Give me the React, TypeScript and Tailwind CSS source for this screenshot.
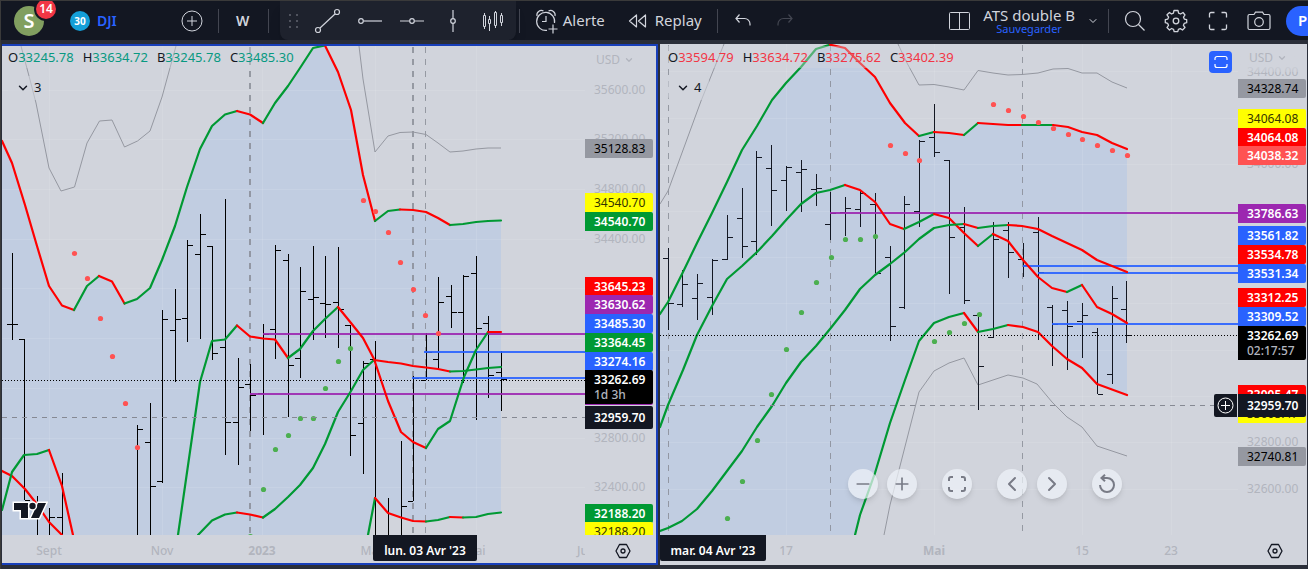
import React from 'react';
import { ChevronDown, ChevronLeft, ChevronRight, Minus, Plus } from 'lucide-react';

type Tone = 'red' | 'green';
type Segment = [Tone, string];
// x, high, low, open, close (null when the tick is out of view)
type Bar = [number, number, number, number | null, number | null];
type Dot = [number, number];
type Level = { y: number; from: number; color: string };
type Cursor = { x: number; width: number };
type Tag = { y: number; text: string; style: string; sub?: string };
type TimeLabel = { x: number; text: string; bold?: boolean };

interface ChartData {
  box: { x: number; y: number; w: number; h: number };
  fill: string;
  lines: Segment[][];
  grey: string[];
  bars: Bar[];
  barColor: string;
  redDots: Dot[];
  greenDots: Dot[];
  levels: Level[];
  cursors: Cursor[];
  cursorY: number;
  priceY: number;
  gridX: number[];
  gridY: number[];
}

const PURPLE = '#9c27b0';
const BLUE = '#2962ff';

const DAILY: ChartData = {
  box: { x: 2, y: 46, w: 583, h: 489 },
  fill: '2,141 12,163 25,205 37,246 49,286 62,305.5 74,310 87,286 99,276 112,281.5 124.5,303.5 137,299 150,288 162,260 175,226 187,187 200,149 212,126 225,114.5 237,111 250,114.5 263,123 275,103 288,86 300,68 313,48 325,45.5 338,72 351,110 363,175 375,221 388,211 400,209.5 413,210 426,212 438,218 450,225 463,224 476,222 488,221 501,220.5 501,512.5 488,514 476,517 463,517.5 450,517 438,520 426,521.5 413,521 401,517.5 388,513 375,498 368,535 2,535',
  lines: [
    [
      ['red', '2,141 12,163 25,205 37,246 49,286 62,305.5 74,310'],
      ['green', '74,310 87,286 99,276'],
      ['red', '99,276 112,281.5 124.5,303.5'],
      ['green', '124.5,303.5 137,299 150,288 162,260 175,226 187,187 200,149 212,126 225,114.5 237,111'],
      ['red', '237,111 250,114.5 263,123'],
      ['green', '263,123 275,103 288,86 300,68 313,48 325,45.5'],
      ['red', '325,45.5 338,72 351,110 363,175 375,221'],
      ['green', '375,221 388,211 400,209.5'],
      ['red', '400,209.5 413,210 426,212 438,218 450,225'],
      ['green', '450,225 463,224 476,222 488,221 501,220.5'],
    ],
    [['red', '2,471 12,476 25,489 36,503 49,522 62,535']],
    [
      ['green', '2,510 12,472 24,455 37,454 49,450'],
      ['red', '49,450 62,486 73,535'],
    ],
    [
      ['green', '178,535 200,382 212,341 225,339.5 237,325.5'],
      ['red', '237,325.5 250,336.5 263,338.5 275,339.5 288,358'],
      ['green', '288,358 300,349 313,331 325,319 338,307'],
      ['red', '338,307 351,323 363,338 374,359 388,401 401,432 413,442 426,448'],
      ['green', '426,448 438,429 450,421 464,377 476,350 488,332'],
      ['red', '488,332 501,332'],
    ],
    [
      ['green', '198,535 212,520.5 225,514.5 237,512.5'],
      ['red', '237,512.5 250,514.5 263,517.5'],
      ['green', '263,517.5 275,509 288,497 300,485 313,468 325,444 338,412 351,391 363,370 374,360'],
      ['red', '374,360 388,362 401,363.5 413,366 426,367.5 438,369 450,371.5'],
      ['green', '450,371.5 463,371 476,369.5 488,368 501,367'],
    ],
    [
      ['green', '368,535 375,498'],
      ['red', '375,498 388,513 401,517.5 413,521 426,521.5'],
      ['green', '426,521.5 438,520 450,517'],
      ['red', '450,517 463,517.5'],
      ['green', '463,517.5 476,517 488,514 501,512.5'],
    ],
  ],
  grey: [
    '21,46 29,76 36,103 49,168 61,191 74.5,187 87,143 99.5,121 112,120 124.5,147 137.5,141 150,131 162,97 176,46',
    '359,46 363,79 375,152 388,136 400,132.5 413,132 426,134.5 438,143 450,152 463,151 476,149 488,148 501,148',
  ],
  bars: [
    [12, 253, 340, 324, 324],
    [24, 339, 500, 339, 500],
    [37, 496, 540, null, null],
    [49, 508, 540, null, 517],
    [62, 473, 540, 517, null],
    [137, 425, 540, null, 429],
    [150, 403, 540, 442, 486],
    [162, 310, 483, 481, 319],
    [175, 289, 382, 330, 319],
    [187, 240, 342, 318, 245],
    [200, 214, 339, 254, 234],
    [212, 246, 360, 246, 353],
    [225, 199, 455, 347, 422],
    [238, 358, 465, 422, 387],
    [250, 364, 431, 384, 395],
    [263, 324, 435, 393, 334],
    [275, 245, 359, 329, 250],
    [288, 254, 417, 260, 365],
    [300, 267, 378, 358, 291],
    [313, 246, 340, 299, 297],
    [325, 256, 338, 303, 304],
    [338, 247, 348, 302, 309],
    [350, 325, 456, 325, 435],
    [363, 361, 474, 423, 363],
    [375, 341, 540, 359, null],
    [388, 498, 540, null, null],
    [401, 441, 540, null, 506],
    [413, 376, 501, 501, 378],
    [426, 333, 380, 380, 352],
    [438, 277, 369, 359, 302],
    [451, 285, 328, 296, 312],
    [463, 275, 383, 312, 276],
    [476, 256, 420, 273, 328],
    [488, 316, 398, 323, 375],
    [501, 351, 411, 372, 379],
  ],
  barColor: '#000000',
  redDots: [[74.5, 253], [87.5, 278], [100.5, 318], [112.5, 356], [125.5, 403], [137.5, 447], [363.5, 200], [375.5, 211], [388.5, 232], [400.5, 262], [413.5, 289], [425.5, 315], [438.5, 333]],
  greenDots: [[250.5, 536], [263.5, 489], [275.5, 449], [288.5, 435], [300.5, 418], [313.5, 418], [325.5, 388], [338.5, 361], [350.5, 348]],
  levels: [
    { y: 334, from: 263, color: PURPLE },
    { y: 394, from: 250, color: PURPLE },
    { y: 352, from: 424, color: BLUE },
    { y: 378, from: 412, color: BLUE },
  ],
  cursors: [{ x: 250, width: 2 }, { x: 413, width: 2 }, { x: 425.5, width: 1 }],
  cursorY: 417.5,
  priceY: 380.5,
  gridX: [49.5, 162.5, 262.5, 375.5, 476.5],
  gridY: [90.5, 139.5, 189.5, 239.5, 288.5, 338.5, 388.5, 438.5, 487.5],
};

const HOURLY: ChartData = {
  box: { x: 660, y: 44, w: 578, h: 491 },
  fill: '660,314 668,302 683,272 697,243 712,213 727,182 742,150 757,126 772,100 786,83 801,67 816,49 830,44.7 845,48 860,63 875,77 890,103 905,123 919,136 934,132 949,133 964,135 978,123 993,124 1008,125 1053,125 1068,127 1082,132 1097,135 1112,143 1127,149 1127,395 1097,384 1082,368 1067,359 1052,346 1038,332 1023,327 1008,325 993,329 978,332 964,313 949,317 934,323 919,341 905,380 890,423 875,473 860,515 855,535 660,535',
  lines: [
    [
      ['green', '660,314 668,302 683,272 697,243 712,213 727,182 742,150 757,126 772,100 786,83 801,67 816,49 830,44.7'],
      ['red', '830,44.7 845,48 860,63 875,77 890,103 905,123 919,136'],
      ['green', '919,136 934,132'],
      ['red', '934,132 949,133 964,135'],
      ['green', '964,135 978,123'],
      ['red', '978,123 993,124 1008,125 1022,125'],
      ['green', '1022,125 1053,125'],
      ['red', '1053,125 1068,127 1082,132 1097,135 1112,143 1127,149'],
    ],
    [
      ['green', '660,427 668,405 683,370 697,335 712,306 727,279 742,266 757,252 772,236 787,219 801,204 816,193 830,190 845,185'],
      ['red', '845,185 860,190 875,202 890,224 904,229'],
      ['green', '904,229 919,222 934,214'],
      ['red', '934,214 949,218 964,233 978,246'],
      ['green', '978,246 993,234'],
      ['red', '993,234 1008,241 1023,260 1038,277 1052,288 1067,292'],
      ['green', '1067,292 1082,285'],
      ['red', '1082,285 1097,307 1112,314 1127,323'],
    ],
    [
      ['green', '660,531 668,528 682,521 697,509 712,491 727,471 742,451 757,427 772,406 786,383 801,362 816,346 830,329 845,310 860,289 875,275 890,264 905,252 919,239 934,228 949,225 964,224'],
      ['red', '964,224 978,228'],
      ['green', '978,228 993,226 1008,225'],
      ['red', '1008,225 1022,226 1038,229 1052,236 1067,243 1082,250 1097,260 1112,266 1127,272'],
    ],
    [
      ['green', '855,535 860,515 875,473 890,423 905,380 919,341 934,323 949,317 964,313'],
      ['red', '964,313 978,332'],
      ['green', '978,332 993,329 1008,325'],
      ['red', '1008,325 1023,327 1038,332 1052,346 1067,359 1082,368 1097,384 1127,395'],
    ],
  ],
  grey: [
    '660,204 668,191 701,101 724,44',
    '898,44 907,63 919,85 934,84.5 949,87 964,90 978,70.5 993,73 1008,75 1022,74.5 1038,73 1053,69 1068,68.5 1082,73 1097,73 1112,82 1127,88',
    '884,535 890,505 919,392 934,371 949,363 964,358 978,385 993,380 1008,375 1023,378 1037,384 1052,402 1067,417 1082,427 1097,446 1127,456',
  ],
  bars: [
    [668, 248, 330, 258, 303],
    [682, 270, 307, 304, 284],
    [697, 274, 320, 298, 283],
    [712, 259, 315, 297, 260],
    [727, 215, 260, 259, 237],
    [742, 188, 258, 218, 246],
    [756, 151, 255, 241, 157],
    [771, 145, 226, 168, 190],
    [786, 166, 211, 180, 167],
    [801, 160, 212, 172, 169],
    [816, 174, 206, 189, 188],
    [830, 192, 240, 224, 213],
    [845, 197, 236, 212, 208],
    [860, 191, 227, 209, 193],
    [875, 193, 273, 204, 273],
    [890, 246, 341, 257, 326],
    [904, 196, 309, 307, 204],
    [919, 140, 227, 211, 141],
    [934, 104, 157, 137, 152],
    [949, 160, 294, 160, 237],
    [964, 207, 304, 227, 300],
    [978, 315, 410, 315, 366],
    [993, 222, 338, 337, 239],
    [1008, 222, 278, 230, 252],
    [1023, 243, 277, 259, 265],
    [1038, 217, 340, 232, 272],
    [1052, 305, 366, 307, 324],
    [1067, 301, 370, 310, 326],
    [1082, 303, 358, 321, 315],
    [1097, 328, 394, 332, 394],
    [1112, 286, 384, 374, 298],
    [1126, 281, 343, 309, 335],
  ],
  barColor: '#131722',
  redDots: [[890.5, 145], [905.5, 153], [919.5, 160], [993.5, 104], [1008.5, 110], [1023.5, 116], [1038.5, 122], [1053.5, 128], [1068.5, 134], [1082.5, 139], [1097.5, 145], [1112.5, 150], [1127.5, 155]],
  greenDots: [[727.5, 518], [742.5, 481], [757.5, 440], [771.5, 394], [786.5, 349], [801.5, 312], [816.5, 282], [831.5, 257], [845.5, 239], [860.5, 239], [875.5, 236], [934.5, 341], [949.5, 332], [964.5, 323], [979.5, 314]],
  levels: [
    { y: 213, from: 830, color: PURPLE },
    { y: 266, from: 1023, color: BLUE },
    { y: 273, from: 1038, color: BLUE },
    { y: 324, from: 1052, color: BLUE },
  ],
  cursors: [{ x: 668.5, width: 1 }, { x: 830.5, width: 1 }, { x: 1022.5, width: 1 }],
  cursorY: 405.5,
  priceY: 335.5,
  gridX: [786.5, 934.5, 1082.5, 1171.5],
  gridY: [71.5, 118.5, 164.5, 211.5, 257.5, 303.5, 350.5, 396.5, 442.5, 489.5],
};

const GREY_TAG = 'bg-[#9598a1] text-black';
const YELLOW_TAG = 'bg-[#ffff00] text-[#333300]';
const GREEN_TAG = 'bg-[#009933] text-white font-semibold';
const RED_TAG = 'bg-[#ff0000] text-white font-semibold';
const LIGHT_RED_TAG = 'bg-[#ff5252] text-white font-semibold';
const PURPLE_TAG = 'bg-[#9c27b0] text-white font-semibold';
const BLUE_TAG = 'bg-[#2962ff] text-white font-semibold';

const DAILY_TAGS: Tag[] = [
  { y: 139, text: '35128.83', style: GREY_TAG },
  { y: 193, text: '34540.70', style: YELLOW_TAG },
  { y: 212, text: '34540.70', style: GREEN_TAG },
  { y: 277, text: '33645.23', style: RED_TAG },
  { y: 386, text: '', style: PURPLE_TAG },
  { y: 295, text: '33630.62', style: PURPLE_TAG },
  { y: 314, text: '33485.30', style: BLUE_TAG },
  { y: 333, text: '33364.45', style: GREEN_TAG },
  { y: 352, text: '33274.16', style: BLUE_TAG },
  { y: 370, text: '33262.69', style: 'bg-black text-white font-semibold', sub: '1d 3h' },
  { y: 504, text: '32188.20', style: GREEN_TAG },
  { y: 522, text: '32188.20', style: YELLOW_TAG },
];

const HOURLY_TAGS: Tag[] = [
  { y: 79, text: '34328.74', style: GREY_TAG },
  { y: 109, text: '34064.08', style: YELLOW_TAG },
  { y: 128, text: '34064.08', style: RED_TAG },
  { y: 146, text: '34038.32', style: LIGHT_RED_TAG },
  { y: 204, text: '33786.63', style: PURPLE_TAG },
  { y: 226, text: '33561.82', style: BLUE_TAG },
  { y: 245, text: '33534.78', style: RED_TAG },
  { y: 264, text: '33531.34', style: BLUE_TAG },
  { y: 288, text: '33312.25', style: RED_TAG },
  { y: 307, text: '33309.52', style: BLUE_TAG },
  { y: 326, text: '33262.69', style: 'bg-black text-white font-semibold', sub: '02:17:57' },
  { y: 385, text: '33005.47', style: RED_TAG },
  { y: 404, text: '33005.47', style: YELLOW_TAG },
  { y: 447, text: '32740.81', style: GREY_TAG },
];

const TONES = { red: '#ff0000', green: '#009933' };

const Plot: React.FC<{ data: ChartData }> = ({ data }) => {
  const { x, y, w, h } = data.box;
  const right = x + w;
  const bottom = y + h;
  return (
    <svg className="block h-full w-full" viewBox={`${x} ${y} ${w} ${h}`} preserveAspectRatio="none">
      <polygon points={data.fill} fill="#c1cde1" />
      {data.gridX.map((gx) => (
        <line key={gx} x1={gx} x2={gx} y1={y} y2={bottom} stroke="#ffffff" strokeOpacity={0.1} />
      ))}
      {data.gridY.map((gy) => (
        <line key={gy} x1={x} x2={right} y1={gy} y2={gy} stroke="#ffffff" strokeOpacity={0.1} />
      ))}
      {data.cursors.map((c) => (
        <line key={c.x} x1={c.x} x2={c.x} y1={y + 1} y2={bottom} stroke="#868993" strokeOpacity={0.8} strokeWidth={c.width} strokeDasharray="6 6" />
      ))}
      {data.grey.map((points) => (
        <polyline key={points} points={points} fill="none" stroke="#9598a1" strokeWidth={1} />
      ))}
      <g fill={data.barColor}>
        {data.bars.map(([bx, high, low, open, close]) => (
          <g key={bx}>
            <rect x={bx} y={high} width={1} height={low - high} />
            {open !== null && <rect x={bx - 5} y={open} width={5} height={1} />}
            {close !== null && <rect x={bx + 1} y={close} width={5} height={1} />}
          </g>
        ))}
      </g>
      {data.levels.map((l) => (
        <line key={l.y} x1={l.from} x2={right} y1={l.y} y2={l.y} stroke={l.color} strokeOpacity={0.9} strokeWidth={2} />
      ))}
      {data.lines.map((line, i) => (
        <g key={i} fill="none" strokeWidth={2.2} strokeLinejoin="round" strokeLinecap="round">
          {line.map(([tone, points]) => (
            <polyline key={points} points={points} stroke={TONES[tone]} />
          ))}
        </g>
      ))}
      {data.redDots.map(([dx, dy]) => (
        <circle key={dx} cx={dx} cy={dy + 0.5} r={2.6} fill="#ff5252" />
      ))}
      {data.greenDots.map(([dx, dy]) => (
        <circle key={dx} cx={dx} cy={dy + 0.5} r={2.6} fill="#4caf50" />
      ))}
      <line x1={x} x2={right} y1={data.priceY} y2={data.priceY} stroke="#000000" strokeDasharray="1 2" />
      <line x1={x} x2={right} y1={data.cursorY} y2={data.cursorY} stroke="#868993" strokeDasharray="5 5" />
    </svg>
  );
};

interface LegendProps {
  values: [string, string][];
  tone: string;
  count: number;
  className: string;
}

const Legend: React.FC<LegendProps> = ({ values, tone, count, className }) => (
  <div className={`absolute text-[#131722] ${className}`}>
    <div className="flex gap-[9px] bg-[#d1d4dc]/40">
      {values.map(([name, value]) => (
        <span key={name} className="text-[13px] leading-[22px]">
          {name}
          <span className={tone}>{value}</span>
        </span>
      ))}
    </div>
    <button className="mt-2 flex h-6 items-center gap-1 rounded bg-[#d1d4dc]/60 px-2 text-[13px]">
      <ChevronDown className="h-3.5 w-3.5" strokeWidth={2.5} />
      {count}
    </button>
  </div>
);

interface PriceAxisProps {
  top: number;
  ticks: [number, string][];
  tags: Tag[];
  cursor: number;
  className: string;
}

const PriceAxis: React.FC<PriceAxisProps> = ({ top, ticks, tags, cursor, className }) => (
  <div className={`relative shrink-0 overflow-hidden text-xs ${className}`}>
    {ticks.map(([y, text]) => (
      <span key={text} className="absolute left-[9px] leading-4 text-[#b2b5be]" style={{ top: y - top - 8 }}>
        {text}
      </span>
    ))}
    <button className="absolute top-0 left-0 flex h-7 w-full items-center gap-1 bg-linear-to-b from-[#d1d4dc] from-70% to-[#d1d4dc]/40 pl-[11px] text-[#b2b5be]">
      USD
      <ChevronDown className="h-2.5 w-2.5" strokeWidth={3} />
    </button>
    {tags.map((tag) => (
      <div key={tag.y} className={`absolute left-0 w-[68px] rounded-r-xs pl-[9px] ${tag.style}`} style={{ top: tag.y - top }}>
        <div className="h-[19px] leading-[19px]">{tag.text}</div>
        {tag.sub && <div className="h-[15px] leading-3 font-medium text-[#b2b5be]">{tag.sub}</div>}
      </div>
    ))}
    <div className="absolute left-0 h-[23px] w-[68px] rounded-r-xs bg-[#131722] pl-[9px] leading-[23px] font-semibold text-white" style={{ top: cursor - top }}>
      32959.70
    </div>
  </div>
);

interface TimeAxisProps {
  box: ChartData['box'];
  labels: TimeLabel[];
  cursor: string;
  cursorX: number;
  cursorClass: string;
  className: string;
  cornerClass: string;
}

const TimeAxis: React.FC<TimeAxisProps> = ({ box, labels, cursor, cursorX, cursorClass, className, cornerClass }) => (
  <div className={`flex text-xs ${className}`}>
    <div className="relative min-w-0 flex-1 overflow-hidden">
      {labels.map((label) => (
        <span
          key={label.text}
          className={`absolute top-0 -translate-x-1/2 leading-8 text-[#b2b5be] ${label.bold ? 'font-bold' : 'font-medium'}`}
          style={{ left: `${((label.x - box.x) / box.w) * 100}%` }}
        >
          {label.text}
        </span>
      ))}
      <div
        className={`absolute top-0 h-[26px] rounded-b-xs bg-[#131722] text-center leading-8 font-semibold text-white ${cursorClass}`}
        style={{ left: `${((cursorX - box.x) / box.w) * 100}%` }}
      >
        {cursor}
      </div>
    </div>
    <div className={`flex shrink-0 justify-center pt-2 pl-1 ${cornerClass}`}>
      <button className="h-4 w-4" aria-label="Paramètres de l'échelle">
        <svg viewBox="0 0 16 16" className="h-4 w-4" fill="none" stroke="#131722" strokeWidth={1.3}>
          <path d="M4.5 1.5h7L15 8l-3.5 6.5h-7L1 8z" strokeLinejoin="round" />
          <circle cx="8" cy="8" r="2" />
        </svg>
      </button>
    </div>
  </div>
);

const TradingViewMark: React.FC = () => (
  <svg className="absolute bottom-3.5 left-2.5 h-5 w-9" viewBox="0 0 36 20" fill="#131722" stroke="#ffffff" strokeWidth={3} paintOrder="stroke">
    <path d="M2 2h14v15H9V9H2z" />
    <path d="M26 2h8l-7 15h-8z" />
    <circle cx="20.500" cy="5" r="3.200" />
  </svg>
);

const Divider: React.FC<{ className: string }> = ({ className }) => <div className={`h-6 w-px shrink-0 bg-[#434651] ${className}`} />;

const Toolbar: React.FC = () => (
  <header className="flex h-[39px] items-center overflow-hidden bg-[#131722] text-[#d1d4dc]">
    <button className="relative ml-[13px] h-[30px] w-[30px] shrink-0 rounded-full bg-[#819f60] text-xl leading-[30px] font-semibold text-white" aria-label="Compte">
      S
      <span className="absolute -top-[7px] left-[22px] h-5 w-5 rounded-full bg-[#f23645] text-xs leading-5 ring-2 ring-[#131722]">14</span>
    </button>
    <button className="ml-[26px] flex items-center gap-[7px] text-sm font-semibold text-[#2962ff]">
      <span className="h-5 w-5 rounded-full bg-[#149fd8] text-center text-[10px] leading-5 font-bold text-white">30</span>
      DJI
    </button>
    <button className="ml-[64px]" aria-label="Comparer">
      <svg width="22" height="22" viewBox="0 0 22 22" fill="none" stroke="currentColor">
        <circle cx="11" cy="11" r="10" />
        <path d="M11 6v10M6 11h10" />
      </svg>
    </button>
    <Divider className="ml-[15px]" />
    <button className="w-12 text-center text-sm font-semibold">W</button>
    <Divider className="ml-px" />

    <div className="ml-[11px] flex h-full w-[236px] shrink-0 items-center rounded-b-lg bg-[#1e222d] shadow-lg">
      <svg className="ml-2" width="12" height="16" viewBox="0 0 12 16" fill="#50535e">
        {[1, 7, 13].map((y) => (
          <g key={y}>
            <rect x="1" y={y} width="2" height="2" />
            <rect x="8" y={y} width="2" height="2" />
          </g>
        ))}
      </svg>
      <button className="ml-[13px]" aria-label="Ligne de tendance">
        <svg width="28" height="28" viewBox="0 0 28 28" fill="none" stroke="currentColor" strokeWidth={1.2}>
          <circle cx="5" cy="23" r="2.500" />
          <circle cx="24" cy="5" r="2.500" />
          <path d="M7 21 22 7" />
        </svg>
      </button>
      <button className="ml-[15px]" aria-label="Rayon horizontal">
        <svg width="28" height="28" viewBox="0 0 28 28" fill="none" stroke="currentColor" strokeWidth={1.2}>
          <circle cx="5" cy="14" r="2.300" />
          <path d="M7.500 14H26" />
        </svg>
      </button>
      <button className="ml-[14px]" aria-label="Ligne horizontale">
        <svg width="28" height="28" viewBox="0 0 28 28" fill="none" stroke="currentColor" strokeWidth={1.2}>
          <circle cx="14" cy="14" r="2.300" />
          <path d="M2 14h9.500M16.500 14H26" />
        </svg>
      </button>
      <button className="ml-[13px]" aria-label="Ligne verticale">
        <svg width="28" height="28" viewBox="0 0 28 28" fill="none" stroke="currentColor" strokeWidth={1.2}>
          <circle cx="14" cy="14" r="2.300" />
          <path d="M14 3v8.500M14 16.500V25" />
        </svg>
      </button>
      <button className="ml-3" aria-label="Modèle de barres">
        <svg width="28" height="28" viewBox="0 0 28 28" fill="none" stroke="currentColor">
          <path d="M5.500 6v3M5.500 19v3M10.500 9v3M10.500 17v7M16.500 4v2M16.500 19v2M22.500 6v3M22.500 16v3" />
          <path d="M4.500 8.500h2v11h-2zM9.500 12.500h2v4h-2zM15.500 5.500h2v13h-2zM21.500 8.500h2v7h-2z" />
        </svg>
      </button>
    </div>

    <Divider className="ml-[3px]" />
    <button className="ml-[13px] flex items-center gap-1 text-[15px] whitespace-nowrap">
      <svg width="26" height="26" viewBox="0 0 26 26" fill="none" stroke="currentColor" strokeWidth={1.2}>
        <path d="M14 22.300A9 9 0 1 1 21.500 15M4 8a4.500 4.500 0 0 1 6.500-5M15.500 3A4.500 4.500 0 0 1 22 8M13 8v5.500H9" />
        <path d="M20 16.500v9M15.500 21h9" />
      </svg>
      Alerte
    </button>
    <button className="ml-[22px] flex items-center gap-2 text-[15px]">
      <svg width="20" height="16" viewBox="0 0 20 16" fill="none" stroke="currentColor" strokeWidth={1.2} strokeLinejoin="round">
        <path d="M9.500 2v12L2.500 8zM18.500 2v12l-7-6z" />
      </svg>
      Replay
    </button>
    <Divider className="ml-[15px]" />
    <button className="ml-4" aria-label="Annuler">
      <svg width="18" height="16" viewBox="0 0 18 16" fill="none" stroke="currentColor" strokeWidth={1.2}>
        <path d="M5.500 1.500 2 5.500l3.500 4M2 5.500h8.500a5.500 5.500 0 0 1 5.500 5.500v1.500" />
      </svg>
    </button>
    <button className="ml-6 text-[#434651]" aria-label="Rétablir" disabled>
      <svg width="18" height="16" viewBox="0 0 18 16" fill="none" stroke="currentColor" strokeWidth={1.2}>
        <path d="M12.500 1.500 16 5.500l-3.500 4M16 5.500H7.500A5.500 5.500 0 0 0 2 11v1.500" />
      </svg>
    </button>

    <button className="ml-auto" aria-label="Disposition">
      <svg width="22" height="20" viewBox="0 0 22 20" fill="none" stroke="currentColor">
        <rect x="0.500" y="1.500" width="20" height="17" rx="1" />
        <path d="M10.500 1.500v17" />
      </svg>
    </button>
    <button className="ml-3 flex shrink-0 flex-col items-center whitespace-nowrap">
      <span className="text-[15px] leading-4">ATS double B</span>
      <span className="text-[11px] leading-3 text-[#2962ff]">Sauvegarder</span>
    </button>
    <button className="ml-3" aria-label="Menu des dispositions">
      <ChevronDown className="h-3 w-3" />
    </button>
    <Divider className="ml-[9px]" />
    <button className="ml-[15px]" aria-label="Rechercher">
      <svg width="22" height="22" viewBox="0 0 22 22" fill="none" stroke="currentColor" strokeWidth={1.2}>
        <circle cx="9" cy="9" r="7.500" />
        <path d="m14.500 14.500 6 6" />
      </svg>
    </button>
    <button className="ml-[18px]" aria-label="Paramètres">
      <svg width="24" height="24" viewBox="0 0 24 24" fill="none" stroke="currentColor" strokeWidth={1.3} strokeLinejoin="round">
        <path d="M10 1.500h4l.6 2.700 2 .8L19 3.500 21 6l-1.500 2.200.8 1.900 2.400.6v3l-2.500.7-.8 1.900L21 18.500 18.500 21l-2.200-1.400-1.900.8-.6 2.300h-3.600l-.7-2.400-1.900-.8L5.500 21 3 18.500l1.500-2.200-.8-1.900-2.400-.7v-3l2.500-.6.8-1.900L3 5.800 5.500 3.500 7.500 5l1.900-.8z" />
        <circle cx="12" cy="12" r="2.800" />
      </svg>
    </button>
    <button className="ml-5" aria-label="Plein écran">
      <svg width="20" height="20" viewBox="0 0 20 20" fill="none" stroke="currentColor" strokeWidth={1.3}>
        <path d="M1.500 6.500V3A1.500 1.500 0 0 1 3 1.500h3.500M13.500 1.500H17A1.500 1.500 0 0 1 18.500 3v3.500M18.500 13.500V17a1.500 1.500 0 0 1-1.500 1.500h-3.500M6.500 18.500H3A1.500 1.500 0 0 1 1.500 17v-3.500" />
      </svg>
    </button>
    <button className="ml-[19px]" aria-label="Capture d'écran">
      <svg width="24" height="20" viewBox="0 0 24 20" fill="none" stroke="currentColor" strokeWidth={1.2}>
        <path d="M2.500 3.500H7l1.500-2.300h7L17 3.500h4.500a1.500 1.500 0 0 1 1.500 1.500v12a1.500 1.500 0 0 1-1.500 1.500h-19A1.500 1.500 0 0 1 1 17V5a1.500 1.500 0 0 1 1.500-1.500z" />
        <circle cx="12" cy="11" r="4.300" />
      </svg>
    </button>
    <button className="ml-[15px] h-[30px] w-[22px] shrink-0 overflow-hidden rounded-l-full bg-[#2962ff] pl-3 text-left text-[15px] font-semibold text-white">
      P
    </button>
  </header>
);

const NAV_STYLE = 'flex h-[30px] w-[30px] items-center justify-center rounded-full bg-[#f0f3fa]/70 text-[#787b86] shadow-md';

const ChartNav: React.FC = () => (
  <div className="absolute inset-x-0 bottom-[66px] flex items-center justify-center gap-[25px] pl-0.5">
    <div className="flex gap-[9px]">
      <button className={NAV_STYLE} aria-label="Zoom arrière"><Minus className="h-5 w-5" /></button>
      <button className={NAV_STYLE} aria-label="Zoom avant"><Plus className="h-5 w-5" /></button>
    </div>
    <button className={NAV_STYLE} aria-label="Agrandir">
      <svg width="18" height="16" viewBox="0 0 18 16" fill="none" stroke="currentColor" strokeWidth={2}>
        <path d="M1 5V3a2 2 0 0 1 2-2h2M13 1h2a2 2 0 0 1 2 2v2M17 11v2a2 2 0 0 1-2 2h-2M5 15H3a2 2 0 0 1-2-2v-2" />
      </svg>
    </button>
    <div className="flex gap-[10px]">
      <button className={NAV_STYLE} aria-label="Vers la gauche"><ChevronLeft className="h-6 w-6" /></button>
      <button className={NAV_STYLE} aria-label="Vers la droite"><ChevronRight className="h-6 w-6" /></button>
    </div>
    <button className={NAV_STYLE} aria-label="Réinitialiser">
      <svg width="18" height="20" viewBox="0 0 18 20" fill="none" stroke="currentColor" strokeWidth={2}>
        <path d="M2 11a7 7 0 1 0 7-7H4M7 .8 3.500 4 7 7.200" />
      </svg>
    </button>
  </div>
);

const App: React.FC = () => {
  return (
    <div className="border-t border-l border-[#3a3a3a] bg-[#2a2e39] pb-1 font-['Noto_Sans',sans-serif]">
      <Toolbar />
      <main className="mt-1 grid grid-cols-[656fr_647fr] gap-0.5 pr-px pl-px">
        <section className="min-w-0 border-y-2 border-r-2 border-[#183fba] bg-[#d1d4dc]">
          <div className="flex h-[489px]">
            <div className="relative min-w-0 flex-1">
              <Plot data={DAILY} />
              <Legend
                values={[['O', '33245.78'], ['H', '33634.72'], ['B', '33245.78'], ['C', '33485.30']]}
                tone="text-[#089981]"
                count={3}
                className="top-0 left-1.5"
              />
              <TradingViewMark />
            </div>
            <PriceAxis
              top={46}
              ticks={[[90, '35600.00'], [139, '35200.00'], [189, '34800.00'], [239, '34400.00'], [438, '32800.00'], [487, '32400.00']]}
              tags={DAILY_TAGS}
              cursor={406}
              className="w-[71px]"
            />
          </div>
          <TimeAxis
            box={DAILY.box}
            labels={[{ x: 49, text: 'Sept' }, { x: 162, text: 'Nov' }, { x: 262, text: '2023', bold: true }, { x: 375, text: 'Mars' }, { x: 475, text: 'Mai' }, { x: 588, text: 'Juin' }]}
            cursor="lun. 03 Avr '23"
            cursorX={373}
            cursorClass="w-[104px]"
            className="h-7"
            cornerClass="w-[71px]"
          />
        </section>

        <section className="relative min-w-0 bg-[#d1d4dc]">
          <div className="flex h-[491px]">
            <div className="relative min-w-0 flex-1">
              <Plot data={HOURLY} />
              <Legend
                values={[['O', '33594.79'], ['H', '33634.72'], ['B', '33275.62'], ['C', '33402.39']]}
                tone="text-[#f23645]"
                count={4}
                className="top-0.5 left-2"
              />
              <button className="absolute top-[7px] right-1.5 flex h-[22px] w-[23px] items-center justify-center rounded bg-[#2962ff] text-white" aria-label="Réduire le graphique">
                <svg width="14" height="14" viewBox="0 0 14 14" fill="none" stroke="currentColor" strokeWidth={1.2}>
                  <path d="M1 5V3.500a2 2 0 0 1 2-2h8a2 2 0 0 1 2 2V5M1 9v1.500a2 2 0 0 0 2 2h8a2 2 0 0 0 2-2V9" />
                </svg>
              </button>
              <button className="absolute top-[350px] right-px flex h-[23px] w-[23px] items-center justify-center rounded-l-xs bg-[#131722] text-white" aria-label="Ajouter au prix">
                <svg width="17" height="17" viewBox="0 0 17 17" fill="none" stroke="currentColor">
                  <circle cx="8.500" cy="8.500" r="7.500" />
                  <path d="M8.500 4v9M4 8.500h9" />
                </svg>
              </button>
            </div>
            <PriceAxis
              top={44}
              ticks={[[72, '34400.00'], [164, '34000.00'], [442, '32800.00'], [489, '32600.00']]}
              tags={HOURLY_TAGS}
              cursor={394}
              className="w-[69px]"
            />
          </div>
          <TimeAxis
            box={HOURLY.box}
            labels={[{ x: 786, text: '17' }, { x: 934, text: 'Mai', bold: true }, { x: 1082, text: '15' }, { x: 1171, text: '23' }]}
            cursor="mar. 04 Avr '23"
            cursorX={660}
            cursorClass="w-[106px]"
            className="h-[30px]"
            cornerClass="w-[69px]"
          />
          <ChartNav />
        </section>
      </main>
    </div>
  );
};

export default App;
